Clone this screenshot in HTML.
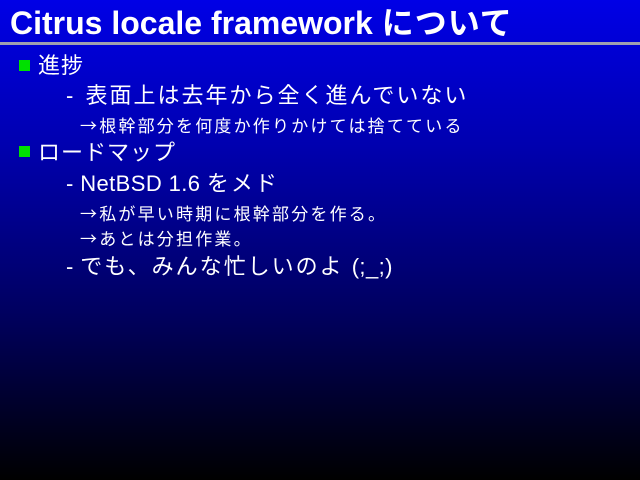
<!DOCTYPE html>
<html><head><meta charset="utf-8"><style>
html,body{margin:0;padding:0}
body{width:640px;height:480px;overflow:hidden;position:relative;background:linear-gradient(to bottom,#0000e6 0%,#0000b0 30%,#000060 65%,#000000 100%);font-family:"Liberation Sans","Noto Sans CJK JP",sans-serif;color:#fff}
.t{position:absolute;white-space:nowrap;line-height:1}
.title{left:10px;top:7px;font-size:32px;font-weight:bold}
.rule{position:absolute;left:0;top:42px;width:640px;height:3px;background:#a0a0b0}
.b{position:absolute;width:11px;height:11px;background:#00e000}
.l1{font-size:22px;letter-spacing:1px}
.l2{font-size:22px;letter-spacing:2px}
.l3{font-size:17px;letter-spacing:2.2px}
.a{font-family:"Noto Sans CJK JP",sans-serif}
.n{letter-spacing:0.4px}
</style></head><body>
<div class="t title">Citrus locale framework <span style="letter-spacing:1px">について</span></div>
<div class="rule"></div>
<div class="b" style="left:19px;top:60px"></div>
<div class="t l1" style="left:38px;top:55px">進捗</div>
<div class="t l2" style="left:66px;top:85px"><span class="n" style="letter-spacing:3px">- </span>表面上は去年から全く進んでいない</div>
<div class="t l3" style="left:80px;top:116px"><span class="a">→</span>根幹部分を何度か作りかけては捨てている</div>
<div class="b" style="left:19px;top:146px"></div>
<div class="t l1" style="left:38px;top:142px">ロードマップ</div>
<div class="t l2" style="left:66px;top:173px"><span class="n">- NetBSD 1.6 </span>をメド</div>
<div class="t l3" style="left:80px;top:204px"><span class="a">→</span>私が早い時期に根幹部分を作る。</div>
<div class="t l3" style="left:80px;top:229px"><span class="a">→</span>あとは分担作業。</div>
<div class="t l2" style="left:66px;top:256px"><span class="n">- </span>でも、みんな忙しいのよ <span class="n">(;_;)</span></div>
</body></html>
